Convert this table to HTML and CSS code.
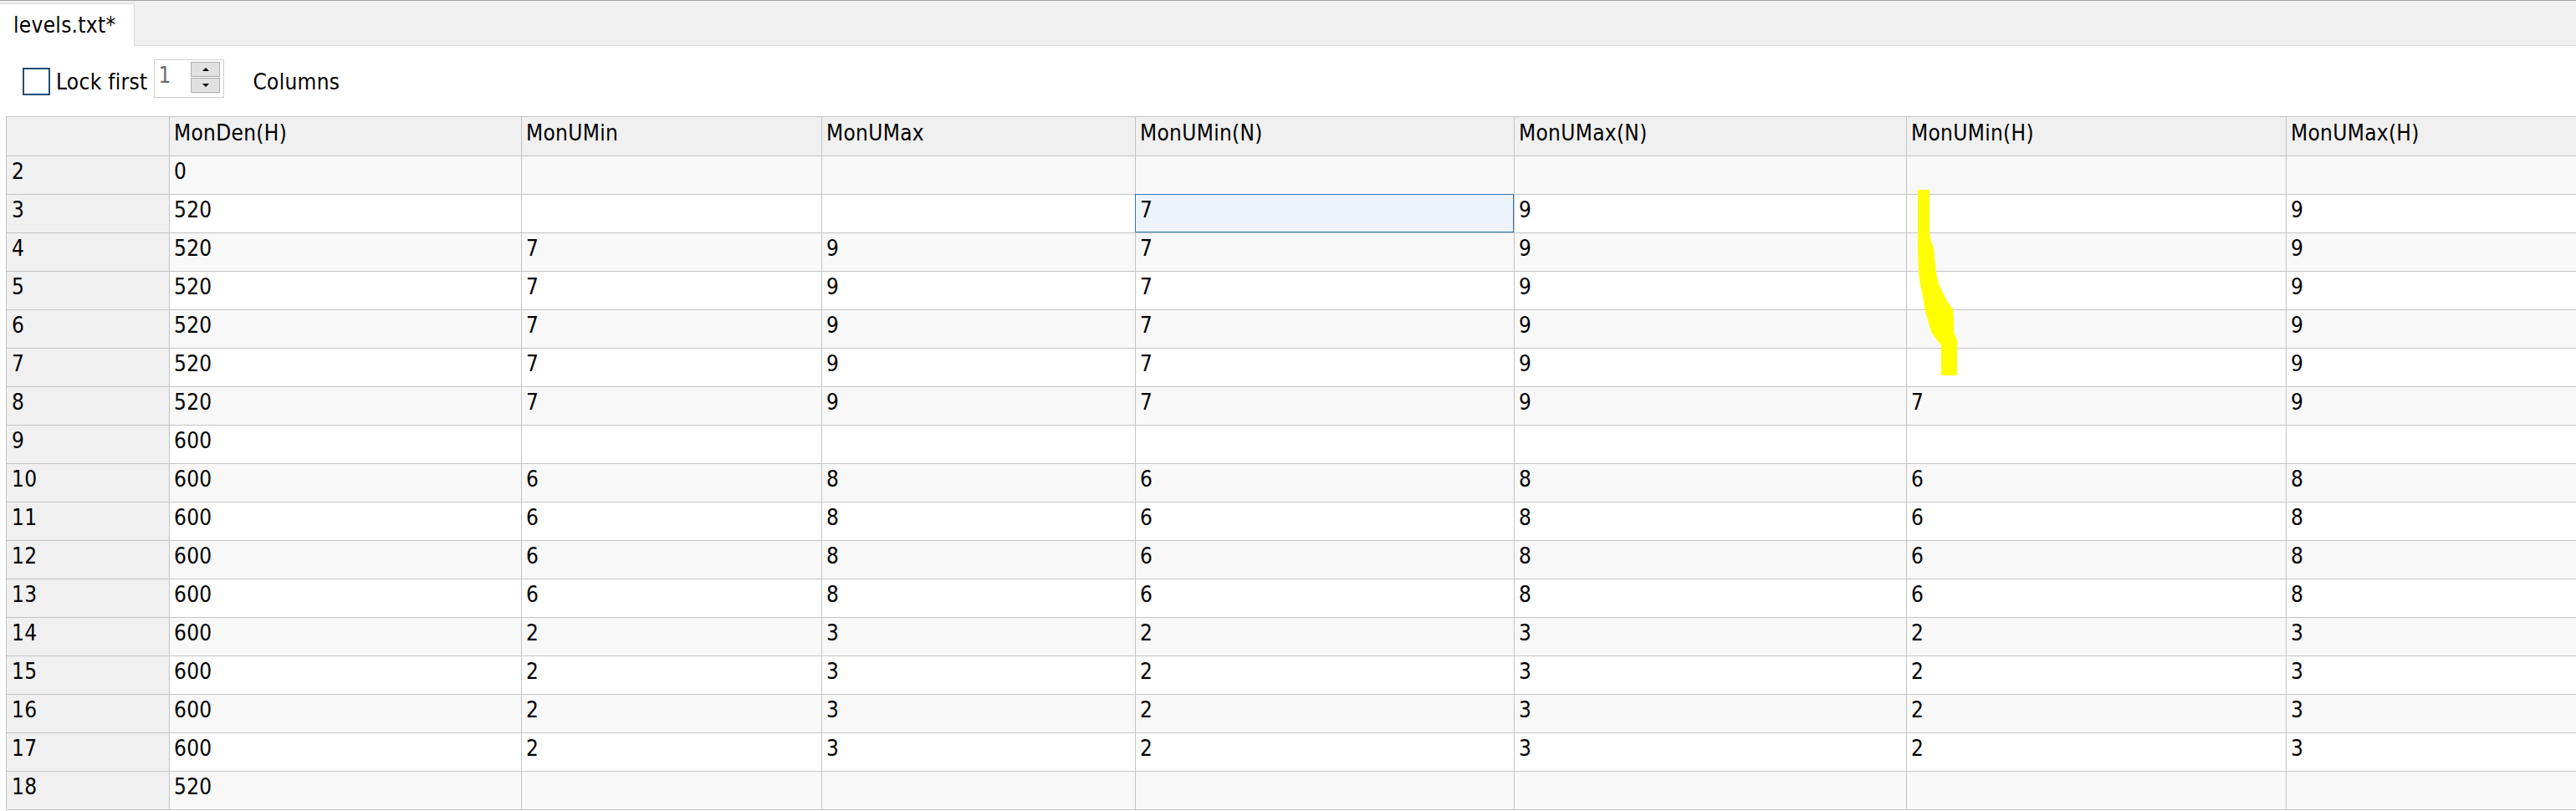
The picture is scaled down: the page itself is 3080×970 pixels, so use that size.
FILE: index.html
```html
<!DOCTYPE html>
<html>
<head>
<meta charset="utf-8">
<link rel="stylesheet" href="styles.css">
</head>
<body>
<div class="tabbar"><div class="tab">levels.txt*</div></div>
<div class="toolbar">
  <span class="checkbox"></span>
  <span class="label">Lock first</span>
  <span class="spin"><span class="spin-val">1</span><span class="spin-btns"><span class="sbtn"><span class="tri-up"></span></span><span class="sbtn"><span class="tri-down"></span></span></span></span>
  <span class="label cols">Columns</span>
</div>
<div class="table">
  <div class="row head"><div class="c rh"></div><div class="c">MonDen(H)</div><div class="c">MonUMin</div><div class="c">MonUMax</div><div class="c">MonUMin(N)</div><div class="c">MonUMax(N)</div><div class="c">MonUMin(H)</div><div class="c">MonUMax(H)</div></div>
  <div class="row"><div class="c rh">2</div><div class="c">0</div><div class="c"></div><div class="c"></div><div class="c"></div><div class="c"></div><div class="c"></div><div class="c"></div></div>
  <div class="row"><div class="c rh">3</div><div class="c">520</div><div class="c"></div><div class="c"></div><div class="c sel">7</div><div class="c">9</div><div class="c"></div><div class="c">9</div></div>
  <div class="row"><div class="c rh">4</div><div class="c">520</div><div class="c">7</div><div class="c">9</div><div class="c">7</div><div class="c">9</div><div class="c"></div><div class="c">9</div></div>
  <div class="row"><div class="c rh">5</div><div class="c">520</div><div class="c">7</div><div class="c">9</div><div class="c">7</div><div class="c">9</div><div class="c"></div><div class="c">9</div></div>
  <div class="row"><div class="c rh">6</div><div class="c">520</div><div class="c">7</div><div class="c">9</div><div class="c">7</div><div class="c">9</div><div class="c"></div><div class="c">9</div></div>
  <div class="row"><div class="c rh">7</div><div class="c">520</div><div class="c">7</div><div class="c">9</div><div class="c">7</div><div class="c">9</div><div class="c"></div><div class="c">9</div></div>
  <div class="row"><div class="c rh">8</div><div class="c">520</div><div class="c">7</div><div class="c">9</div><div class="c">7</div><div class="c">9</div><div class="c">7</div><div class="c">9</div></div>
  <div class="row"><div class="c rh">9</div><div class="c">600</div><div class="c"></div><div class="c"></div><div class="c"></div><div class="c"></div><div class="c"></div><div class="c"></div></div>
  <div class="row"><div class="c rh">10</div><div class="c">600</div><div class="c">6</div><div class="c">8</div><div class="c">6</div><div class="c">8</div><div class="c">6</div><div class="c">8</div></div>
  <div class="row"><div class="c rh">11</div><div class="c">600</div><div class="c">6</div><div class="c">8</div><div class="c">6</div><div class="c">8</div><div class="c">6</div><div class="c">8</div></div>
  <div class="row"><div class="c rh">12</div><div class="c">600</div><div class="c">6</div><div class="c">8</div><div class="c">6</div><div class="c">8</div><div class="c">6</div><div class="c">8</div></div>
  <div class="row"><div class="c rh">13</div><div class="c">600</div><div class="c">6</div><div class="c">8</div><div class="c">6</div><div class="c">8</div><div class="c">6</div><div class="c">8</div></div>
  <div class="row"><div class="c rh">14</div><div class="c">600</div><div class="c">2</div><div class="c">3</div><div class="c">2</div><div class="c">3</div><div class="c">2</div><div class="c">3</div></div>
  <div class="row"><div class="c rh">15</div><div class="c">600</div><div class="c">2</div><div class="c">3</div><div class="c">2</div><div class="c">3</div><div class="c">2</div><div class="c">3</div></div>
  <div class="row"><div class="c rh">16</div><div class="c">600</div><div class="c">2</div><div class="c">3</div><div class="c">2</div><div class="c">3</div><div class="c">2</div><div class="c">3</div></div>
  <div class="row"><div class="c rh">17</div><div class="c">600</div><div class="c">2</div><div class="c">3</div><div class="c">2</div><div class="c">3</div><div class="c">2</div><div class="c">3</div></div>
  <div class="row"><div class="c rh">18</div><div class="c">520</div><div class="c"></div><div class="c"></div><div class="c"></div><div class="c"></div><div class="c"></div><div class="c"></div></div>
</div>
<svg class="marker" width="3080" height="970" viewBox="0 0 3080 970">
  <polygon fill="#ffff00" points="2293,227 2307,227 2307,277 2308,285 2312,297 2315,327 2318,340 2328,360 2335,370 2336,383 2336,397 2340,407 2340,449 2321,449 2321,413 2316,407 2309,397 2305,383 2301,370 2300,360 2296,340 2294,327 2293,297"/>
</svg>
</body>
</html>
```
FILE: styles.css
```css
html, body {
  margin: 0;
  padding: 0;
  background: #ffffff;
}
body {
  width: 3080px;
  height: 970px;
  overflow: hidden;
  position: relative;
  font-family: "DejaVu Sans Condensed", "DejaVu Sans", sans-serif;
  font-stretch: condensed;
  font-size: 26px;
  letter-spacing: 0.3px;
  color: #000;
}
.tabbar {
  height: 53px;
  background: #f0f0f0;
  border-top: 1px solid #a0a0a0;
  border-bottom: 1px solid #d9d9d9;
  display: flex;
  align-items: flex-start;
}
.tab {
  margin-top: 3px;
  width: 144px;
  height: 50px;
  line-height: 50px;
  padding-left: 16px;
  background: #fff;
  border-top: 1px solid #d9d9d9;
  border-right: 1px solid #d9d9d9;
  white-space: nowrap;
}
.toolbar {
  height: 84px;
  display: flex;
  align-items: center;
  padding-left: 27px;
}
.checkbox {
  width: 29px;
  height: 29px;
  border: 2px solid #234e73;
  background: #fff;
  margin-top: 1px;
}
.label {
  margin-left: 7px;
  line-height: 38px;
  margin-top: 2px;
  white-space: nowrap;
}
.cols {
  margin-left: 34px;
}
.spin {
  margin-left: 8px;
  width: 82px;
  height: 44px;
  border: 1px solid #d0d0d0;
  display: flex;
  align-items: flex-start;
  margin-top: -6px;
}
.spin-val {
  color: #6d6d6d;
  padding-left: 4px;
  line-height: 36px;
  flex: 1;
}
.spin-btns {
  display: flex;
  flex-direction: column;
  gap: 1px;
  margin-top: 2px;
  margin-right: 4px;
}
.sbtn {
  width: 33px;
  height: 16px;
  border: 1px solid #adadad;
  background: #e1e1e1;
  display: flex;
  align-items: center;
  justify-content: center;
}
.tri-up {
  width: 0; height: 0;
  border-left: 4px solid transparent;
  border-right: 4px solid transparent;
  border-bottom: 4px solid #000;
}
.tri-down {
  width: 0; height: 0;
  border-left: 4px solid transparent;
  border-right: 4px solid transparent;
  border-top: 4px solid #000;
}
.table {
  margin-left: 7px;
  width: 3200px;
  border-top: 1px solid #c4c4c4;
  border-left: 1px solid #c4c4c4;
}
.row {
  display: grid;
  grid-template-columns: 195px 421px 359px 375px 453px 469px 454px 1fr;
  height: 46px;
}
.row:nth-child(even) {
  background: #f8f8f8;
}
.row:nth-child(odd) {
  background: #ffffff;
}
.row.head {
  height: 47px;
  background: #f0f0f0;
}
.c {
  box-sizing: border-box;
  border-right: 1px solid #c4c4c4;
  border-bottom: 1px solid #c4c4c4;
  padding-left: 5px;
  line-height: 37px;
  white-space: nowrap;
  position: relative;
}
.head .c {
  line-height: 38px;
}
.rh {
  background: #f0f0f0;
  padding-left: 6px;
}
.sel {
  background: #edf3fd;
}
.sel::after {
  content: "";
  position: absolute;
  left: -1px;
  top: -1px;
  right: 0;
  bottom: 0;
  border: 1px solid #2b7abf;
}
.marker {
  position: absolute;
  left: 0;
  top: 0;
  pointer-events: none;
}
```
